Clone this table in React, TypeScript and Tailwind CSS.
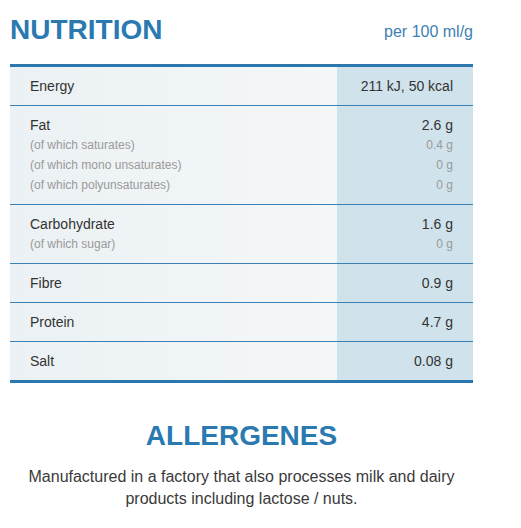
const rows = [
  { label: "Energy", value: "211 kJ, 50 kcal", subs: [] as { label: string; value: string }[] },
  {
    label: "Fat",
    value: "2.6 g",
    subs: [
      { label: "(of which saturates)", value: "0.4 g" },
      { label: "(of which mono unsaturates)", value: "0 g" },
      { label: "(of which polyunsaturates)", value: "0 g" },
    ],
  },
  {
    label: "Carbohydrate",
    value: "1.6 g",
    subs: [{ label: "(of which sugar)", value: "0 g" }],
  },
  { label: "Fibre", value: "0.9 g", subs: [] },
  { label: "Protein", value: "4.7 g", subs: [] },
  { label: "Salt", value: "0.08 g", subs: [] },
];

export default function App() {
  return (
    <div
      className="min-h-screen w-[521px] bg-white px-[10px] pt-[12px] text-[#333]"
      style={{ fontFamily: '"Liberation Sans", Arial, sans-serif' }}
    >
      <div className="w-[463px]">
        {/* Header */}
        <div className="flex items-start justify-between">
          <h1 className="text-[28px] font-bold leading-[36px] text-[#2a79b1]">NUTRITION</h1>
          <span className="mt-[10px] text-[16px] leading-[20px] text-[#3d80b3]">per 100 ml/g</span>
        </div>

        {/* Table */}
        <div className="mt-[16px] border-y-[3px] border-[#2b78ae]">
          {rows.map((row, i) => (
            <div
              key={row.label}
              className={`flex ${i > 0 ? "border-t border-[#3a82b6]" : ""}`}
            >
              <div className="flex-1 bg-gradient-to-r from-[#ebf1f4] to-[#f4f7f8] px-[20px] py-[9px]">
                <div className="text-[14px] leading-[20px]">{row.label}</div>
                {row.subs.map((s) => (
                  <div key={s.label} className="text-[12px] leading-[20px] text-[#9a9a9a]">
                    {s.label}
                  </div>
                ))}
              </div>
              <div className="w-[136px] bg-[#d0e3ec] px-[20px] py-[9px] text-right">
                <div className="text-[14px] leading-[20px]">{row.value}</div>
                {row.subs.map((s) => (
                  <div key={s.label} className="text-[12px] leading-[20px] text-[#9a9a9a]">
                    {s.value}
                  </div>
                ))}
              </div>
            </div>
          ))}
        </div>

        {/* Allergenes */}
        <h2 className="mt-[35px] text-center text-[28px] font-bold leading-[36px] text-[#2a79b1]">
          ALLERGENES
        </h2>
        <p className="mx-auto mt-[12px] max-w-[440px] text-center text-[16px] leading-[22px] text-[#3a3a3a]">
          Manufactured in a factory that also processes milk and dairy products including lactose / nuts.
        </p>
      </div>
    </div>
  );
}
